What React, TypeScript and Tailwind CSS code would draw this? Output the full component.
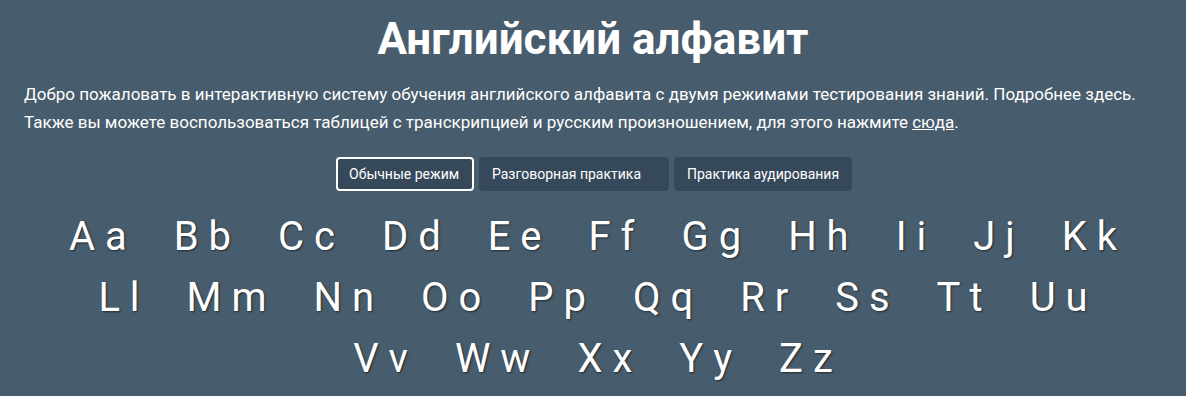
const letters = [
  "A a", "B b", "C c", "D d", "E e", "F f", "G g", "H h", "I i", "J j", "K k",
  "L l", "M m", "N n", "O o", "P p", "Q q", "R r", "S s", "T t", "U u",
  "V v", "W w", "X x", "Y y", "Z z",
];

const modes = [
  { label: "Обычные режим", w: "w-[138px]", active: true },
  { label: "Разговорная практика", w: "w-[190px]", active: false },
  { label: "Практика аудирования", w: "w-[178px]", active: false },
];

export default function App() {
  return (
    <div className="min-h-[396px] w-full bg-[#475c6c] font-['Roboto',sans-serif] text-white">
      <h1 className="pt-[13px] text-center text-[44px] font-bold leading-[53px]">
        Английский алфавит
      </h1>

      <div className="mt-[14px] px-6 text-[17px] leading-[28px]">
        <p>
          Добро пожаловать в интерактивную систему обучения английского алфавита с двумя
          режимами тестирования знаний. Подробнее здесь.
        </p>
        <p>
          Также вы можете воспользоваться таблицей с транскрипцией и русским произношением,
          для этого нажмите <a className="underline">сюда</a>.
        </p>
      </div>

      <div className="mt-[21px] flex justify-center gap-[5px] pl-[2px]">
        {modes.map((m) => (
          <button
            key={m.label}
            className={
              m.w +
              (m.active
                ? " h-[34px] rounded-[4px] border-2 border-white bg-[#36495a] pl-[11px] text-left text-[14px] text-white"
                : " h-[34px] rounded-[4px] border-2 border-transparent bg-[#36495a] pl-[11px] text-left text-[14px] text-white")
            }
          >
            {m.label}
          </button>
        ))}
      </div>

      {/* letters */}
      <div className="mx-auto mt-[15px] flex max-w-[1110px] flex-wrap justify-center">
        {letters.map((l) => (
          <span
            key={l}
            className="mx-[23.5px] whitespace-pre text-[40px] leading-[61px] [text-shadow:1px_1px_2px_rgba(0,0,0,0.55)]"
          >
            {l}
          </span>
        ))}
      </div>
    </div>
  );
}
